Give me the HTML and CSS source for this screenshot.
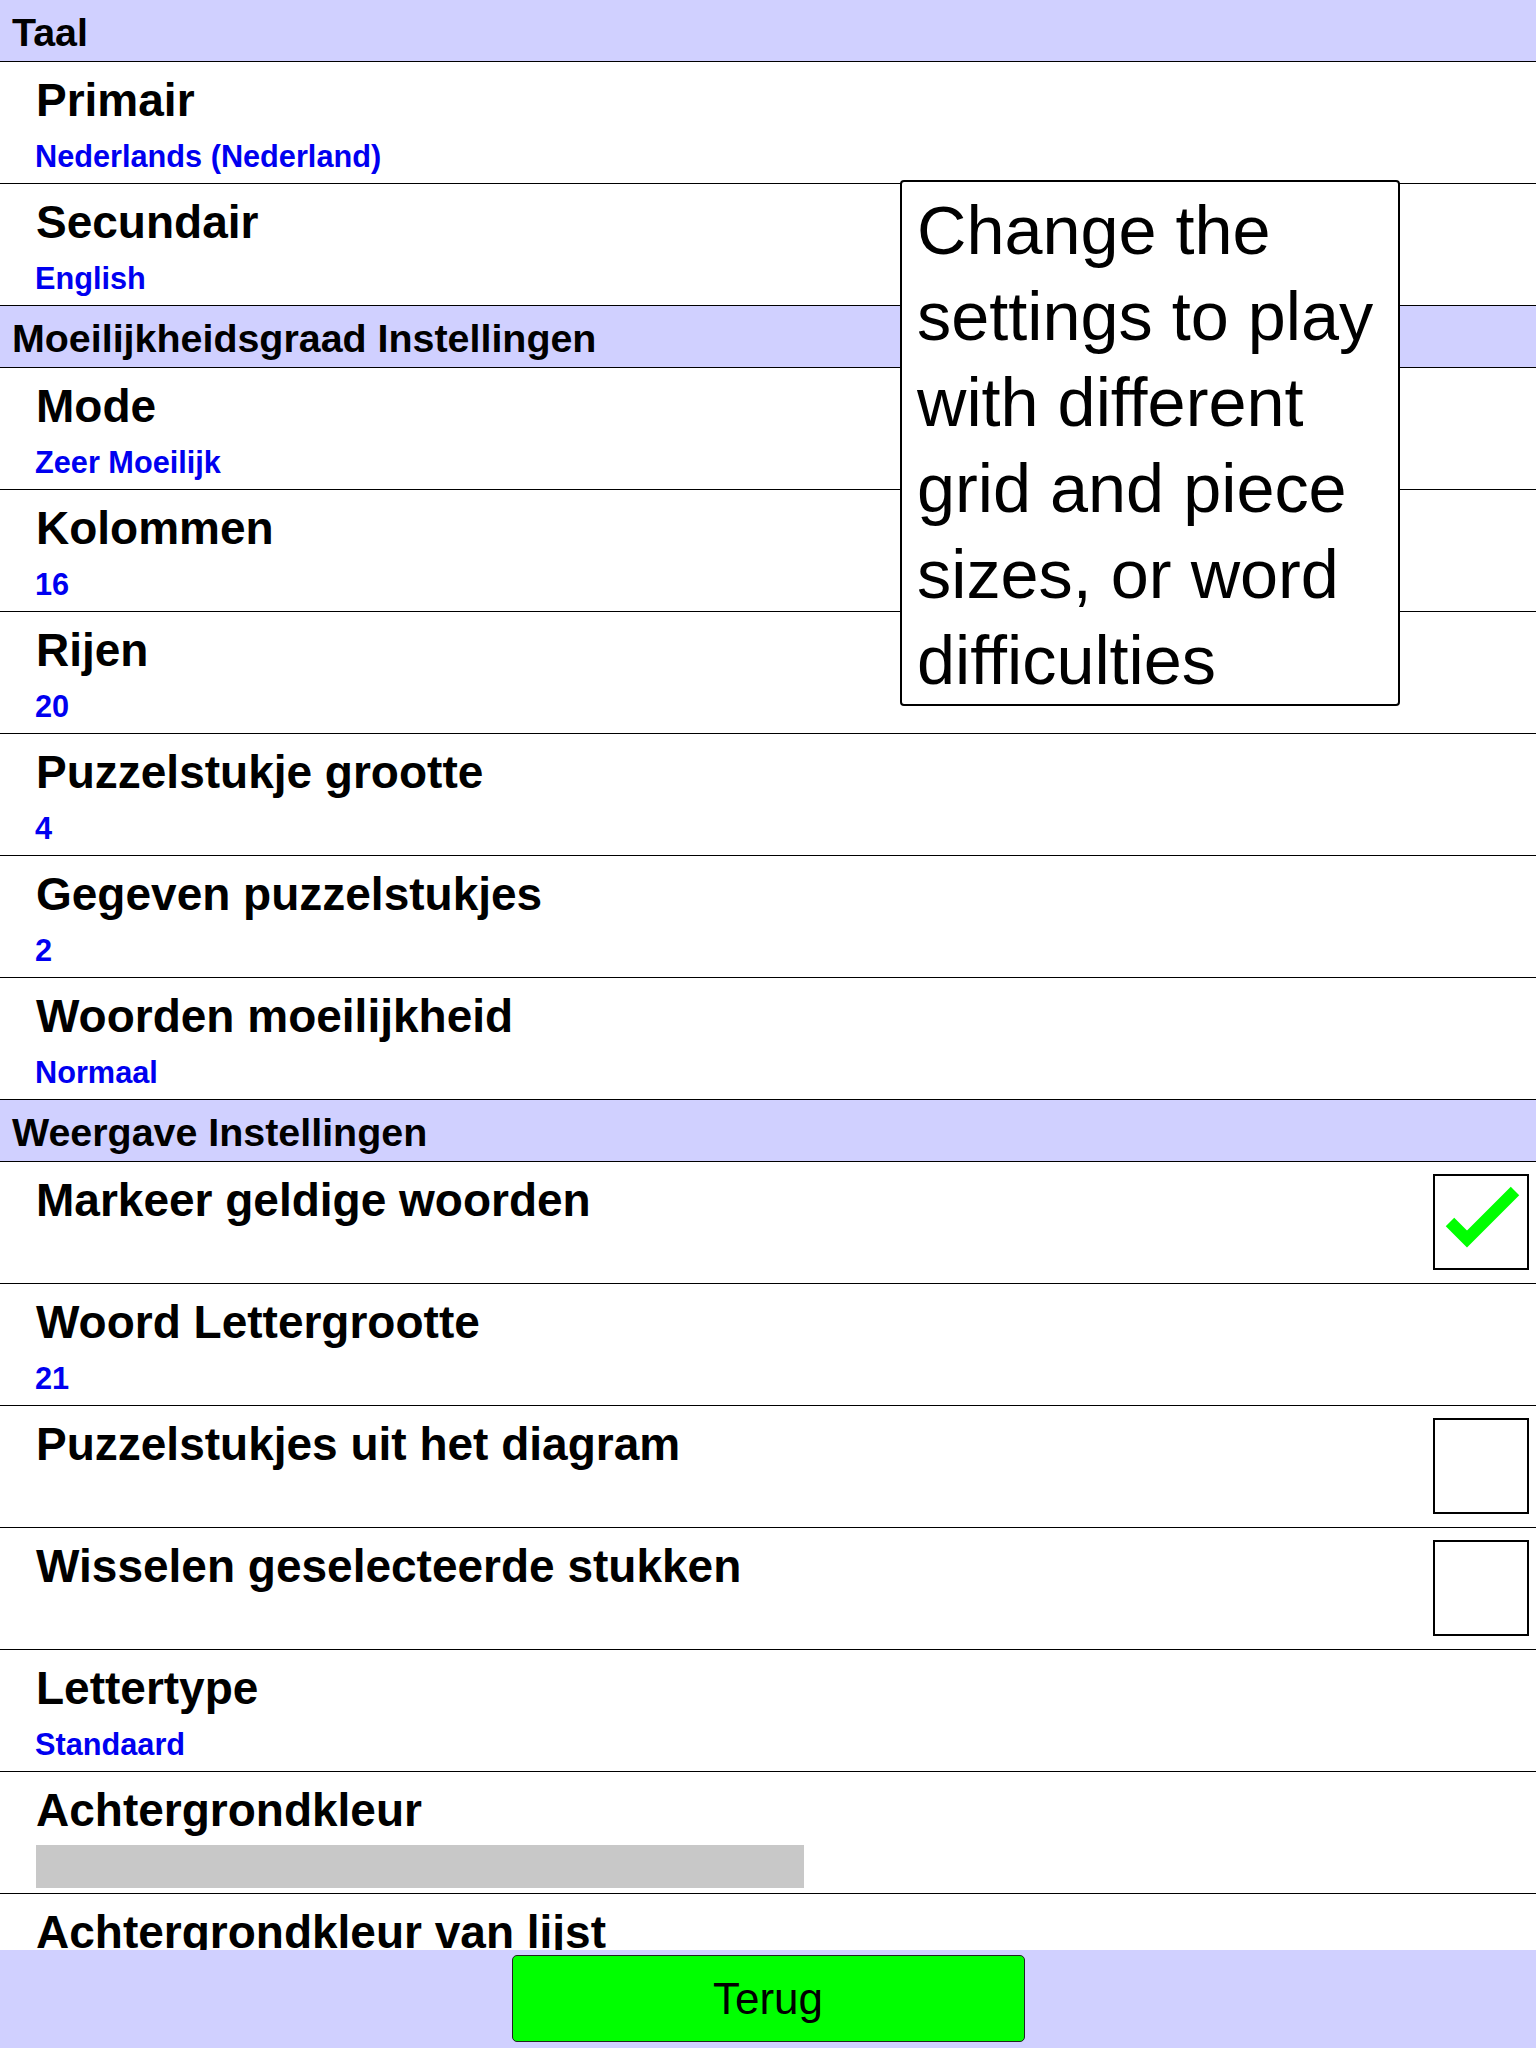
FILE: index.html
```html
<!DOCTYPE html>
<html lang="nl">
<head>
    <meta charset="UTF-8">
    <meta name="viewport" content="width=device-width, initial-scale=1.0">
    <title>Instellingen</title>
    <link rel="stylesheet" href="styles.css">
</head>
<body>
    <div class="screen">
        <div class="list">
            <div class="section">Taal</div>
            <div class="item">
                <div class="item-text">
                    <div class="title">Primair</div>
                    <div class="value">Nederlands (Nederland)</div>
                </div>
            </div>
            <div class="item">
                <div class="item-text">
                    <div class="title">Secundair</div>
                    <div class="value">English</div>
                </div>
            </div>

            <div class="section">Moeilijkheidsgraad Instellingen</div>
            <div class="item">
                <div class="item-text">
                    <div class="title">Mode</div>
                    <div class="value">Zeer Moeilijk</div>
                </div>
            </div>
            <div class="item">
                <div class="item-text">
                    <div class="title">Kolommen</div>
                    <div class="value">16</div>
                </div>
            </div>
            <div class="item">
                <div class="item-text">
                    <div class="title">Rijen</div>
                    <div class="value">20</div>
                </div>
            </div>
            <div class="item">
                <div class="item-text">
                    <div class="title">Puzzelstukje grootte</div>
                    <div class="value">4</div>
                </div>
            </div>
            <div class="item">
                <div class="item-text">
                    <div class="title">Gegeven puzzelstukjes</div>
                    <div class="value">2</div>
                </div>
            </div>
            <div class="item">
                <div class="item-text">
                    <div class="title">Woorden moeilijkheid</div>
                    <div class="value">Normaal</div>
                </div>
            </div>

            <div class="section">Weergave Instellingen</div>
            <div class="item">
                <div class="item-text">
                    <div class="title">Markeer geldige woorden</div>
                </div>
                <div class="check">
                    <svg width="92" height="92" viewBox="0 0 92 92">
                        <polyline points="15,46 32,63 80,15" fill="none" stroke="#00ff00" stroke-width="12"/>
                    </svg>
                </div>
            </div>
            <div class="item">
                <div class="item-text">
                    <div class="title">Woord Lettergrootte</div>
                    <div class="value">21</div>
                </div>
            </div>
            <div class="item">
                <div class="item-text">
                    <div class="title">Puzzelstukjes uit het diagram</div>
                </div>
                <div class="check"></div>
            </div>
            <div class="item">
                <div class="item-text">
                    <div class="title">Wisselen geselecteerde stukken</div>
                </div>
                <div class="check"></div>
            </div>
            <div class="item">
                <div class="item-text">
                    <div class="title">Lettertype</div>
                    <div class="value">Standaard</div>
                </div>
            </div>
            <div class="item">
                <div class="item-text">
                    <div class="title">Achtergrondkleur</div>
                    <div class="swatch"></div>
                </div>
            </div>
            <div class="item">
                <div class="item-text">
                    <div class="title">Achtergrondkleur van lijst</div>
                    <div class="swatch"></div>
                </div>
            </div>
        </div>

        <div class="footer">
            <button class="back">Terug</button>
        </div>

        <div class="tip">Change the settings to play with different grid and piece sizes, or word difficulties</div>
    </div>
</body>
</html>
```

FILE: styles.css
```css
html, body {
    margin: 0;
    padding: 0;
}
body {
    font-family: 'Liberation Sans', Arial, sans-serif;
    color: #000;
    background-color: #fff;
}
.screen {
    position: relative;
    height: 2048px;
    display: flex;
    flex-direction: column;
    overflow: hidden;
}
.list {
    height: 1950px;
    overflow: hidden;
    flex-shrink: 0;
}
.section {
    box-sizing: border-box;
    height: 62px;
    padding: 10px 12px 0;
    background-color: #d0d0ff;
    border-bottom: 1px solid #000;
    font-size: 39.4px;
    font-weight: bold;
    line-height: 1.149;
}
.item {
    box-sizing: border-box;
    height: 122px;
    padding: 0 7px 0 36px;
    border-bottom: 1px solid #000;
    display: flex;
    justify-content: space-between;
    align-items: flex-start;
}
.item-text {
    padding-top: 12px;
}
.title {
    font-size: 46px;
    font-weight: bold;
    line-height: 52px;
    white-space: nowrap;
}
.value {
    margin-top: 13px;
    margin-left: -1px;
    font-size: 30.7px;
    font-weight: bold;
    line-height: 35px;
    color: #0000f0;
}
.swatch {
    margin-top: 9px;
    width: 768px;
    height: 43px;
    background-color: #c8c8c8;
}
.check {
    box-sizing: border-box;
    width: 96px;
    height: 96px;
    margin-top: 12px;
    border: 2px solid #000;
    background-color: #fff;
}
.check svg {
    display: block;
}
.footer {
    flex: 1;
    background-color: #d0d0ff;
    display: flex;
    justify-content: center;
    align-items: flex-start;
    padding-top: 5px;
}
.back {
    width: 513px;
    height: 87px;
    background-color: #00ff00;
    border: 1px solid #222;
    border-radius: 5px;
    font-family: 'Liberation Sans', Arial, sans-serif;
    font-size: 44px;
    color: #000;
    padding: 0;
}
.tip {
    position: absolute;
    left: 900px;
    top: 180px;
    width: 500px;
    box-sizing: border-box;
    padding: 5px 8px 1px 15px;
    background-color: #fff;
    border: 2px solid #000;
    border-radius: 4px;
    font-size: 68.4px;
    line-height: 86px;
}
```
